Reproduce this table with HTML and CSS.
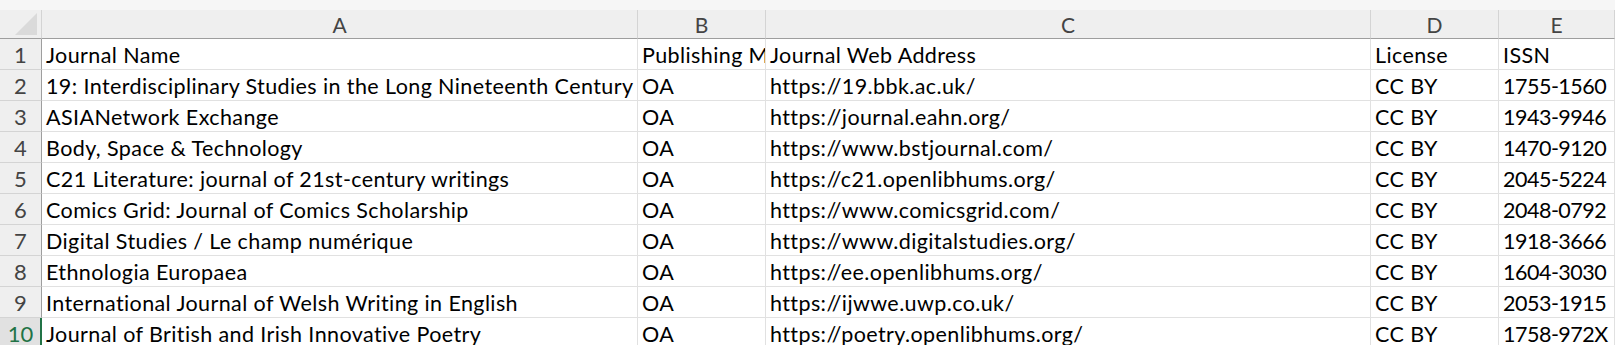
FILE: index.html
```html
<!DOCTYPE html>
<html>
<head>
<meta charset="utf-8">
<link rel="stylesheet" href="styles.css">
</head>
<body>
<div class="band"></div>
<div class="sheet">
  <div class="corner"><span class="tri"></span></div>
  <div class="colhead">A</div>
  <div class="colhead">B</div>
  <div class="colhead">C</div>
  <div class="colhead">D</div>
  <div class="colhead">E</div>

  <div class="rowhead">1</div>
  <div class="cell">Journal Name</div>
  <div class="cell">Publishing Model</div>
  <div class="cell">Journal Web Address</div>
  <div class="cell">License</div>
  <div class="cell">ISSN</div>

  <div class="rowhead">2</div>
  <div class="cell">19: Interdisciplinary Studies in the Long Nineteenth Century</div>
  <div class="cell">OA</div>
  <div class="cell">https://19.bbk.ac.uk/</div>
  <div class="cell">CC BY</div>
  <div class="cell num">1755-1560</div>

  <div class="rowhead">3</div>
  <div class="cell">ASIANetwork Exchange</div>
  <div class="cell">OA</div>
  <div class="cell">https://journal.eahn.org/</div>
  <div class="cell">CC BY</div>
  <div class="cell num">1943-9946</div>

  <div class="rowhead">4</div>
  <div class="cell">Body, Space &amp; Technology</div>
  <div class="cell">OA</div>
  <div class="cell">https://www.bstjournal.com/</div>
  <div class="cell">CC BY</div>
  <div class="cell num">1470-9120</div>

  <div class="rowhead">5</div>
  <div class="cell">C21 Literature: journal of 21st-century writings</div>
  <div class="cell">OA</div>
  <div class="cell">https://c21.openlibhums.org/</div>
  <div class="cell">CC BY</div>
  <div class="cell num">2045-5224</div>

  <div class="rowhead">6</div>
  <div class="cell">Comics Grid: Journal of Comics Scholarship</div>
  <div class="cell">OA</div>
  <div class="cell">https://www.comicsgrid.com/</div>
  <div class="cell">CC BY</div>
  <div class="cell num">2048-0792</div>

  <div class="rowhead">7</div>
  <div class="cell">Digital Studies / Le champ numérique</div>
  <div class="cell">OA</div>
  <div class="cell">https://www.digitalstudies.org/</div>
  <div class="cell">CC BY</div>
  <div class="cell num">1918-3666</div>

  <div class="rowhead">8</div>
  <div class="cell">Ethnologia Europaea</div>
  <div class="cell">OA</div>
  <div class="cell">https://ee.openlibhums.org/</div>
  <div class="cell">CC BY</div>
  <div class="cell num">1604-3030</div>

  <div class="rowhead">9</div>
  <div class="cell">International Journal of Welsh Writing in English</div>
  <div class="cell">OA</div>
  <div class="cell">https://ijwwe.uwp.co.uk/</div>
  <div class="cell">CC BY</div>
  <div class="cell num">2053-1915</div>

  <div class="rowhead active">10</div>
  <div class="cell">Journal of British and Irish Innovative Poetry</div>
  <div class="cell">OA</div>
  <div class="cell">https://poetry.openlibhums.org/</div>
  <div class="cell">CC BY</div>
  <div class="cell num">1758-972X</div>
</div>
</body>
</html>
```

FILE: styles.css
```css
html, body {
  margin: 0;
  padding: 0;
  background: #ffffff;
  overflow: hidden;
}

body {
  font-family: "Lato", "Open Sans", sans-serif;
  width: 1615px;
  height: 345px;
}

.band {
  height: 10px;
  background: #f6f6f6;
}

.sheet {
  display: grid;
  grid-template-columns: 42px 596px 128px 605px 128px 1fr;
  grid-template-rows: 29px;
  grid-auto-rows: 31px;
}

.corner {
  background: #efefef;
  border-right: 1px solid #d4d4d4;
  border-bottom: 1px solid #9e9e9e;
  box-sizing: border-box;
  position: relative;
}

.tri {
  position: absolute;
  left: 15px;
  top: 3px;
  width: 0;
  height: 0;
  border-left: 22px solid transparent;
  border-bottom: 22px solid #dadada;
}

.colhead {
  background: #efefef;
  border-right: 1px solid #d4d4d4;
  border-bottom: 1px solid #9e9e9e;
  box-sizing: border-box;
  color: #444444;
  font-size: 21px;
  text-align: center;
  line-height: 30px;
}

.rowhead {
  background: #efefef;
  border-right: 1px solid #9e9e9e;
  border-bottom: 1px solid #d4d4d4;
  box-sizing: border-box;
  color: #444444;
  font-size: 22px;
  text-align: center;
  line-height: 32px;
}

.rowhead.active {
  background: #e1e1e1;
  color: #217346;
  border-right: 2px solid #217346;
  padding-left: 1px;
}

.cell {
  border-right: 1px solid #e1e1e1;
  border-bottom: 1px solid #e1e1e1;
  box-sizing: border-box;
  color: #000000;
  font-size: 21.5px;
  letter-spacing: 0.4px;
  line-height: 32px;
  padding-left: 4px;
  white-space: nowrap;
  overflow: hidden;
}

.cell.num {
  letter-spacing: -0.5px;
}
```
